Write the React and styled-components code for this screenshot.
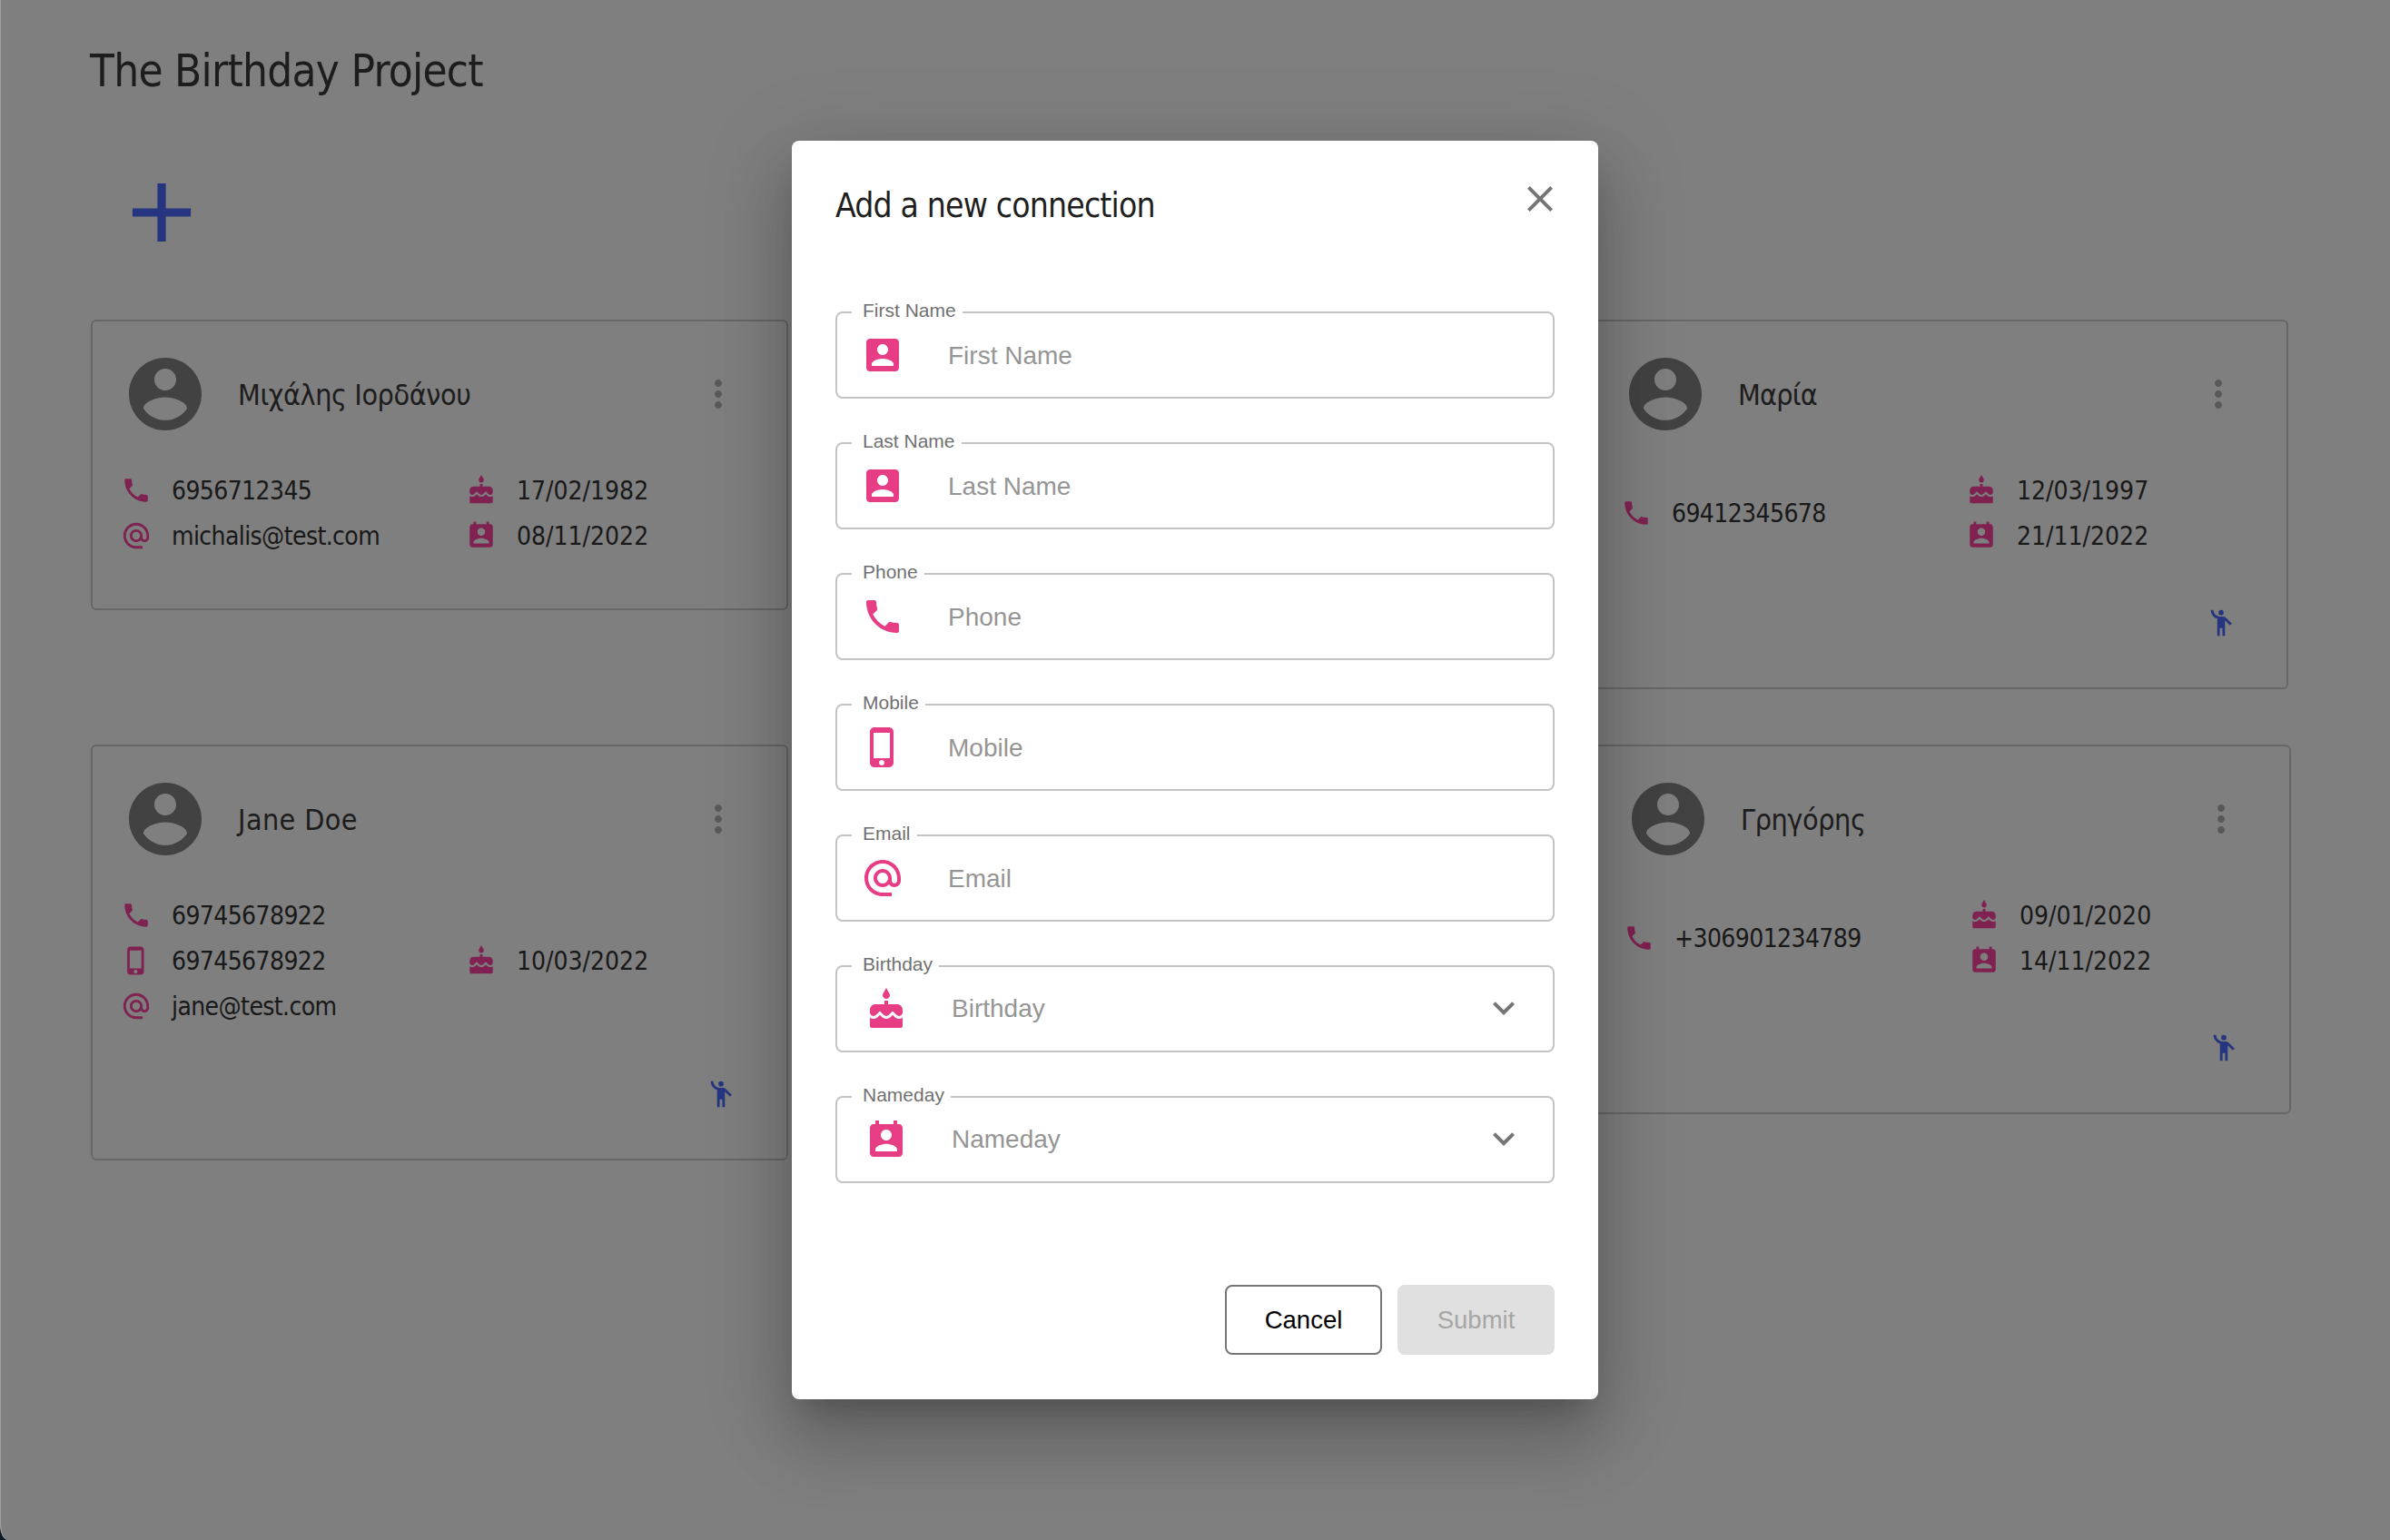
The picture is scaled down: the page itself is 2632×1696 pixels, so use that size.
import React from "react";
import styled, { createGlobalStyle } from "styled-components";

const Global = createGlobalStyle`
  html, body { margin: 0; padding: 0; background: #0d1a26; }
  * { box-sizing: border-box; }
`;

const P = {
  account: "M3 5v14c0 1.1.89 2 2 2h14c1.1 0 2-.9 2-2V5c0-1.1-.9-2-2-2H5c-1.11 0-2 .9-2 2zm12 4c0 1.66-1.34 3-3 3s-3-1.34-3-3 1.34-3 3-3 3 1.34 3 3zm-9 8c0-2 4-3 6-3s6 1 6 3v1H6v-1z",
  phone: "M6.62 10.79c1.44 2.83 3.76 5.14 6.59 6.59l2.2-2.2c.27-.27.67-.36 1.02-.24 1.12.37 2.33.57 3.57.57.55 0 1 .45 1 1V20c0 .55-.45 1-1 1-9.39 0-17-7.61-17-17 0-.55.45-1 1-1h3.5c.55 0 1 .45 1 1 0 1.25.2 2.45.57 3.57.11.35.03.74-.25 1.02l-2.2 2.2z",
  mobile: "M15.5 1h-8C6.12 1 5 2.12 5 3.5v17C5 21.88 6.12 23 7.5 23h8c1.38 0 2.5-1.12 2.5-2.5v-17C18 2.12 16.88 1 15.5 1zm-4 21c-.83 0-1.5-.67-1.5-1.5s.67-1.5 1.5-1.5 1.5.67 1.5 1.5-.67 1.5-1.5 1.5zm4.5-4H7V4h9v14z",
  email: "M12 2C6.48 2 2 6.48 2 12s4.48 10 10 10h5v-2h-5c-4.34 0-8-3.66-8-8s3.66-8 8-8 8 3.66 8 8v1.43c0 .79-.71 1.57-1.5 1.57s-1.5-.78-1.5-1.57V12c0-2.76-2.24-5-5-5s-5 2.24-5 5 2.24 5 5 5c1.38 0 2.64-.56 3.54-1.47.65.89 1.77 1.47 2.96 1.47 1.97 0 3.5-1.6 3.5-3.57V12c0-5.52-4.48-10-10-10zm0 13c-1.66 0-3-1.34-3-3s1.34-3 3-3 3 1.34 3 3-1.34 3-3 3z",
  cake: "M12 6c1.11 0 2-.9 2-2 0-.38-.1-.73-.29-1.03L12 0l-1.71 2.97c-.19.3-.29.65-.29 1.03 0 1.1.9 2 2 2zm4.6 9.99l-1.07-1.07-1.08 1.07c-1.3 1.3-3.58 1.31-4.89 0l-1.07-1.07-1.09 1.07C6.75 16.64 5.88 17 4.96 17c-.73 0-1.4-.23-1.96-.61V21c0 .55.45 1 1 1h16c.55 0 1-.45 1-1v-4.61c-.56.38-1.23.61-1.96.61-.92 0-1.79-.36-2.44-1.01zM18 9h-5V7h-2v2H6c-1.66 0-3 1.34-3 3v1.54c0 1.08.88 1.96 1.96 1.96.52 0 1.02-.2 1.38-.57l2.14-2.13 2.13 2.13c.74.74 2.03.74 2.77 0l2.14-2.13 2.13 2.13c.37.37.86.57 1.38.57 1.08 0 1.96-.88 1.96-1.96V12C21 10.34 19.66 9 18 9z",
  nameday: "M19 3h-1V1h-2v2H8V1H6v2H5c-1.11 0-2 .9-2 2v14c0 1.1.89 2 2 2h14c1.1 0 2-.9 2-2V5c0-1.1-.9-2-2-2zm-7 3c1.66 0 3 1.34 3 3s-1.34 3-3 3-3-1.34-3-3 1.34-3 3-3zm6 12H6v-1c0-2 4-3.1 6-3.1s6 1.1 6 3.1v1z",
  avatar: "M12 2C6.48 2 2 6.48 2 12s4.48 10 10 10 10-4.48 10-10S17.52 2 12 2zm0 3c1.66 0 3 1.34 3 3s-1.34 3-3 3-3-1.34-3-3 1.34-3 3-3zm0 14.2c-2.5 0-4.71-1.28-6-3.22.03-1.99 4-3.08 6-3.08 1.99 0 5.97 1.09 6 3.08-1.29 1.94-3.5 3.22-6 3.22z",
  dots: "M12 8c1.1 0 2-.9 2-2s-.9-2-2-2-2 .9-2 2 .9 2 2 2zm0 2c-1.1 0-2 .9-2 2s.9 2 2 2 2-.9 2-2-.9-2-2-2zm0 6c-1.1 0-2 .9-2 2s.9 2 2 2 2-.9 2-2-.9-2-2-2z",
  people: "M15.89 8.11C15.5 7.72 14.83 7 13.53 7h-2.54C8.24 6.99 6 4.75 6 2H4c0 3.16 2.11 5.84 5 6.71V22h2v-6h2v6h2V10.05L18.95 14l1.41-1.41-4.47-4.48zM12 2a2 2 0 1 0 0 4 2 2 0 0 0 0-4z",
  add: "M19 13h-6v6h-2v-6H5v-2h6V5h2v6h6v2z",
  close: "M19 6.41 17.59 5 12 10.59 6.41 5 5 6.41 10.59 12 5 17.59 6.41 19 12 13.41 17.59 19 19 17.59 13.41 12z",
  chevron: "M16.59 8.59L12 13.17 7.41 8.59 6 10l6 6 6-6z",
};

const Svg = styled.svg`
  display: block;
  flex: none;
  width: ${(p) => p.$size}px;
  height: ${(p) => p.$size}px;
  fill: ${(p) => p.$color};
`;
const Icon = ({ d, size = 48, color = "#e63d85" }) => (
  <Svg viewBox="0 0 24 24" $size={size} $color={color}><path d={d} /></Svg>
);

const PINK = "#ff45a3";
const BLUE = "#4a6aff";
const TAHOMA = `"DejaVu Sans Condensed", "DejaVu Sans", sans-serif`;

const Frame = styled.div`
  position: relative;
  width: 2632px;
  height: 1696px;
  overflow: hidden;
  border-bottom-left-radius: 9px 16px;
  background: #fff;
  border-left: 1px solid #a0a0a0;
  font-family: ${TAHOMA};
  font-stretch: condensed;
  color: #333;
`;
const Page = styled.main`
  padding: 44px 0 0 99px;
`;
const Title = styled.h1`
  margin: 2px 0 0 -1px;
  font-size: 49px;
  letter-spacing: -0.73px;
  line-height: 66px;
  font-weight: 400;
  height: 64px;
  color: #3a3a3a;
`;
const AddButton = styled.button`
  display: block;
  border: 0;
  background: none;
  padding: 0;
  margin: 69px 0 63px 23px;
`;
const Row = styled.section`
  display: grid;
  grid-template-columns: 768px 1fr 768px;
  align-items: start;
  width: ${(p) => p.$width}px;
  margin-bottom: ${(p) => p.$gap}px;
`;
const Card = styled.article`
  grid-column: ${(p) => p.$col};
  position: relative;
  height: ${(p) => p.$height}px;
  border: 2px solid #cfcfcf;
  border-radius: 6px;
  padding: 32px 0 0 32px;
`;
const CardHead = styled.header`
  display: flex;
  align-items: center;
  height: 96px;
`;
const Name = styled.span`
  margin-left: 32px;
  font-size: 32px;
  letter-spacing: ${(p) => p.$tracking}px;
  color: #3a3a3a;
  flex: 1;
  position: relative;
  top: 1px;
`;
const MoreButton = styled.span`
  display: block;
  margin-right: 51px;
`;
const Details = styled.div`
  display: grid;
  grid-template-columns: 380px 1fr;
  align-items: center;
  margin: 33px 0 0;
`;
const DetailColumn = styled.div`
  display: flex;
  flex-direction: column;
  letter-spacing: ${(p) => p.$tracking}px;
`;
const DetailRow = styled.div`
  display: flex;
  align-items: center;
  height: 50px;
  font-size: 28px;
  color: #333;
  gap: 22px;
  margin-left: -1px;
`;
const WaveMark = styled.span`
  position: absolute;
  right: 55px;
  bottom: 54px;
`;
const Backdrop = styled.div`
  position: absolute;
  inset: 0;
  background: rgba(0, 0, 0, 0.5);
  display: flex;
  align-items: center;
  justify-content: center;
`;
const Dialog = styled.div`
  position: relative;
  width: 888px;
  height: 1386px;
  background: #fff;
  border-radius: 8px;
  padding: 42px 48px 0;
  margin-left: -1px;
  box-shadow: 0 22px 30px -14px rgba(0,0,0,.2), 0 48px 76px 6px rgba(0,0,0,.14), 0 18px 92px 16px rgba(0,0,0,.12);
`;
const DialogTitle = styled.h2`
  margin: 0 0 86px;
  height: 60px;
  line-height: 60px;
  font-size: 37px;
  letter-spacing: -0.85px;
  font-weight: 400;
  color: #1f1f1f;
`;
const CloseButton = styled.button`
  position: absolute;
  top: 40px;
  right: 40px;
  border: 0;
  padding: 0;
  background: none;
`;
const Form = styled.form`
  display: flex;
  flex-direction: column;
  gap: 48px;
  font-family: "Liberation Sans", Arial, sans-serif;
`;
const Field = styled.div`
  position: relative;
  display: flex;
  align-items: center;
  height: 96px;
  border: 2px solid #c4c4c4;
  border-radius: 8px;
  padding: ${(p) => (p.$select ? "2px 30px 0 30px" : "0 0 0 26px")};
`;
const FieldLabel = styled.label`
  position: absolute;
  top: -16px;
  left: 16px;
  padding: 0 7px 0 12px;
  background: #fff;
  font-size: 21px;
  line-height: 26px;
  color: #707070;
`;
const Input = styled.input`
  flex: 1;
  min-width: 0;
  border: 0;
  outline: 0;
  margin-left: 48px;
  padding: 0;
  position: relative;
  top: 1px;
  font: 28px "Liberation Sans", Arial, sans-serif;
  color: #222;
  &::placeholder { color: #959595; opacity: 1; }
`;
const SelectValue = styled.span`
  flex: 1;
  margin-left: 48px;
  font-size: 28px;
  color: #959595;
  position: relative;
  top: -1px;
`;
const Chevron = styled.span`
  display: block;
  position: relative;
  top: -2px;
`;
const Actions = styled.div`
  display: flex;
  justify-content: flex-end;
  gap: 17px;
  margin-top: 112px;
`;
const Btn = styled.button`
  width: 173px;
  height: 77px;
  border-radius: 8px;
  font: 27.5px "Liberation Sans", Arial, sans-serif;
  padding: 0;
  border: 2px solid ${(p) => (p.$disabled ? "#e0e0e0" : "#767676")};
  background: ${(p) => (p.$disabled ? "#e0e0e0" : "#fff")};
  color: ${(p) => (p.$disabled ? "#a6a6a6" : "#000")};
`;

const contacts = [
  [
    {
      col: 1, height: 320, name: "Μιχάλης Ιορδάνου", tracking: -0.4,
      left: [[P.phone, "6956712345"], [P.email, "michalis@test.com"]],
      right: [[P.cake, "17/02/1982"], [P.nameday, "08/11/2022"]],
    },
    {
      col: 3, height: 407, name: "Μαρία", tracking: -0.8, wave: true,
      left: [[P.phone, "69412345678"]],
      right: [[P.cake, "12/03/1997"], [P.nameday, "21/11/2022"]],
    },
  ],
  [
    {
      col: 1, height: 458, name: "Jane Doe", tracking: 0.4, wave: true,
      left: [[P.phone, "69745678922"], [P.mobile, "69745678922"], [P.email, "jane@test.com"]],
      right: [[P.cake, "10/03/2022"]],
    },
    {
      col: 3, height: 407, name: "Γρηγόρης", tracking: -0.4, wave: true,
      left: [[P.phone, "+306901234789"]],
      right: [[P.cake, "09/01/2020"], [P.nameday, "14/11/2022"]],
    },
  ],
];

const fields = [
  { label: "First Name", icon: P.account },
  { label: "Last Name", icon: P.account },
  { label: "Phone", icon: P.phone },
  { label: "Mobile", icon: P.mobile },
  { label: "Email", icon: P.email },
  { label: "Birthday", icon: P.cake, select: true },
  { label: "Nameday", icon: P.nameday, select: true },
];

const Detail = ({ d, text }) => (
  <DetailRow>
    <Icon d={d} size={34} color={PINK} />
    <span>{text}</span>
  </DetailRow>
);

const ContactCard = ({ c }) => (
  <Card $col={c.col} $height={c.height}>
    <CardHead>
      <Icon d={P.avatar} size={96} color="#848484" />
      <Name $tracking={c.tracking}>{c.name}</Name>
      <MoreButton><Icon d={P.dots} size={48} color="#b0b0b0" /></MoreButton>
    </CardHead>
    <Details>
      <DetailColumn $tracking={-0.6}>{c.left.map(([d, t]) => <Detail key={t} d={d} text={t} />)}</DetailColumn>
      <DetailColumn $tracking={0}>{c.right.map(([d, t]) => <Detail key={t} d={d} text={t} />)}</DetailColumn>
    </Details>
    {c.wave ? <WaveMark><Icon d={P.people} size={34} color={BLUE} /></WaveMark> : null}
  </Card>
);

export default function App() {
  return (
    <Frame>
      <Global />
      <Page>
        <Title>The Birthday Project</Title>
        <AddButton><Icon d={P.add} size={110} color={BLUE} /></AddButton>
        <Row $width={2420} $gap={61}>{contacts[0].map((c) => <ContactCard key={c.name} c={c} />)}</Row>
        <Row $width={2423} $gap={0}>{contacts[1].map((c) => <ContactCard key={c.name} c={c} />)}</Row>
      </Page>
      <Backdrop>
        <Dialog>
          <DialogTitle>Add a new connection</DialogTitle>
          <CloseButton><Icon d={P.close} size={48} color="#757575" /></CloseButton>
          <Form>
            {fields.map((f) => (
              <Field key={f.label} $select={f.select}>
                <FieldLabel>{f.label}</FieldLabel>
                <Icon d={f.icon} />
                {f.select ? (
                  <>
                    <SelectValue>{f.label}</SelectValue>
                    <Chevron><Icon d={P.chevron} color="#757575" /></Chevron>
                  </>
                ) : (
                  <Input placeholder={f.label} />
                )}
              </Field>
            ))}
          </Form>
          <Actions>
            <Btn type="button">Cancel</Btn>
            <Btn type="button" $disabled>Submit</Btn>
          </Actions>
        </Dialog>
      </Backdrop>
    </Frame>
  );
}
